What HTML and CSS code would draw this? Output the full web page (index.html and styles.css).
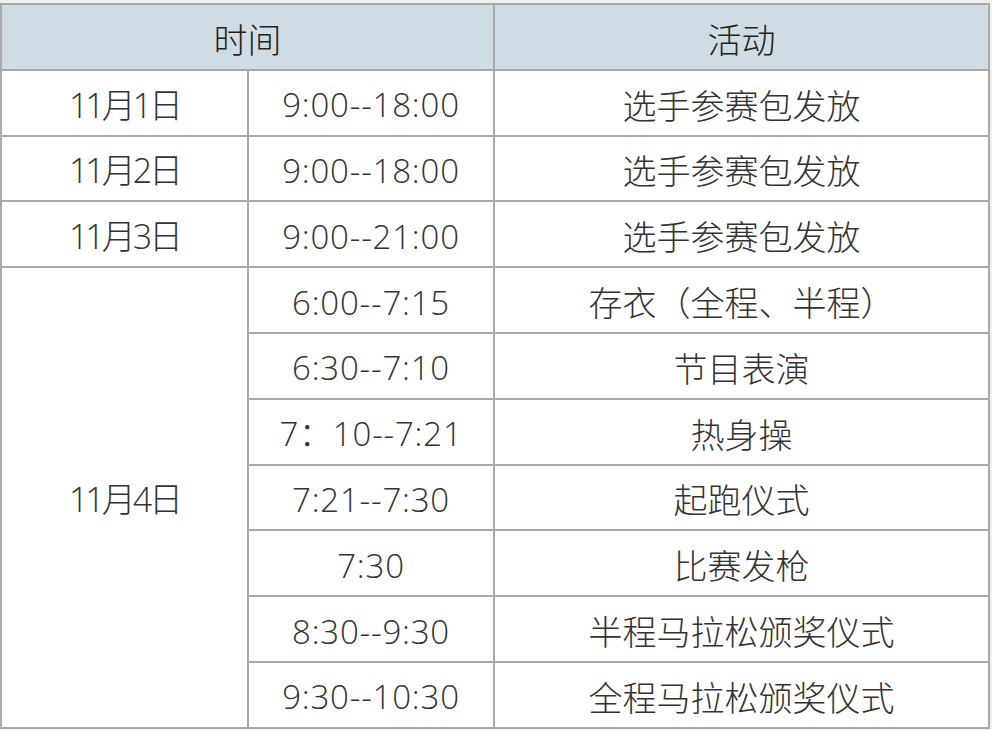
FILE: index.html
```html
<!DOCTYPE html>
<html lang="zh-CN">
<head>
<meta charset="utf-8">
<title>赛事日程</title>
<link rel="stylesheet" href="styles.css">
</head>
<body>
<table class="schedule">
  <colgroup>
    <col class="c-date">
    <col class="c-time">
    <col class="c-act">
  </colgroup>
  <thead>
    <tr class="head">
      <th colspan="2">时间</th>
      <th>活动</th>
    </tr>
  </thead>
  <tbody>
    <tr><td class="date">11月1日</td><td class="num">9:00--18:00</td><td>选手参赛包发放</td></tr>
    <tr><td class="date">11月2日</td><td class="num">9:00--18:00</td><td>选手参赛包发放</td></tr>
    <tr><td class="date">11月3日</td><td class="num">9:00--21:00</td><td>选手参赛包发放</td></tr>
    <tr><td class="date" rowspan="7">11月4日</td><td class="num">6:00--7:15</td><td>存衣（全程、半程）</td></tr>
    <tr><td class="num">6:30--7:10</td><td>节目表演</td></tr>
    <tr><td class="num">7：10--7:21</td><td>热身操</td></tr>
    <tr><td class="num">7:21--7:30</td><td>起跑仪式</td></tr>
    <tr><td class="num">7:30</td><td>比赛发枪</td></tr>
    <tr><td class="num">8:30--9:30</td><td>半程马拉松颁奖仪式</td></tr>
    <tr><td class="num">9:30--10:30</td><td>全程马拉松颁奖仪式</td></tr>
  </tbody>
</table>
</body>
</html>
```
FILE: styles.css
```css
html, body {
  margin: 0;
  padding: 0;
  background: #eff0f0;
}
body {
  padding-top: 3px;
  font-family: "Noto Sans CJK SC", "Open Sans", sans-serif;
  color: #333333;
}
.schedule {
  width: 988px;
  border-collapse: collapse;
  table-layout: fixed;
  background: #ffffff;
  border: 2px solid #a9a9a9;
}
.c-date { width: 247px; }
.c-time { width: 246px; }
.c-act { width: 495px; }
.schedule tr {
  height: 65.8px;
}
.schedule th,
.schedule td {
  border: 2px solid #a9a9a9;
  padding: 4px 0 0 0;
  text-align: center;
  vertical-align: middle;
  font-size: 34px;
  font-weight: 300;
  line-height: 1;
  white-space: nowrap;
}
.head th {
  background: #cfdce4;
  color: #222;
}
.num {
  font-family: "Open Sans", "Noto Sans CJK SC", sans-serif;
  letter-spacing: 0.8px;
}
.schedule .num {
  font-size: 33px;
  font-weight: 300;
}
.date {
  font-family: "Open Sans", "Noto Sans CJK SC", sans-serif;
  letter-spacing: -3px;
}
```
